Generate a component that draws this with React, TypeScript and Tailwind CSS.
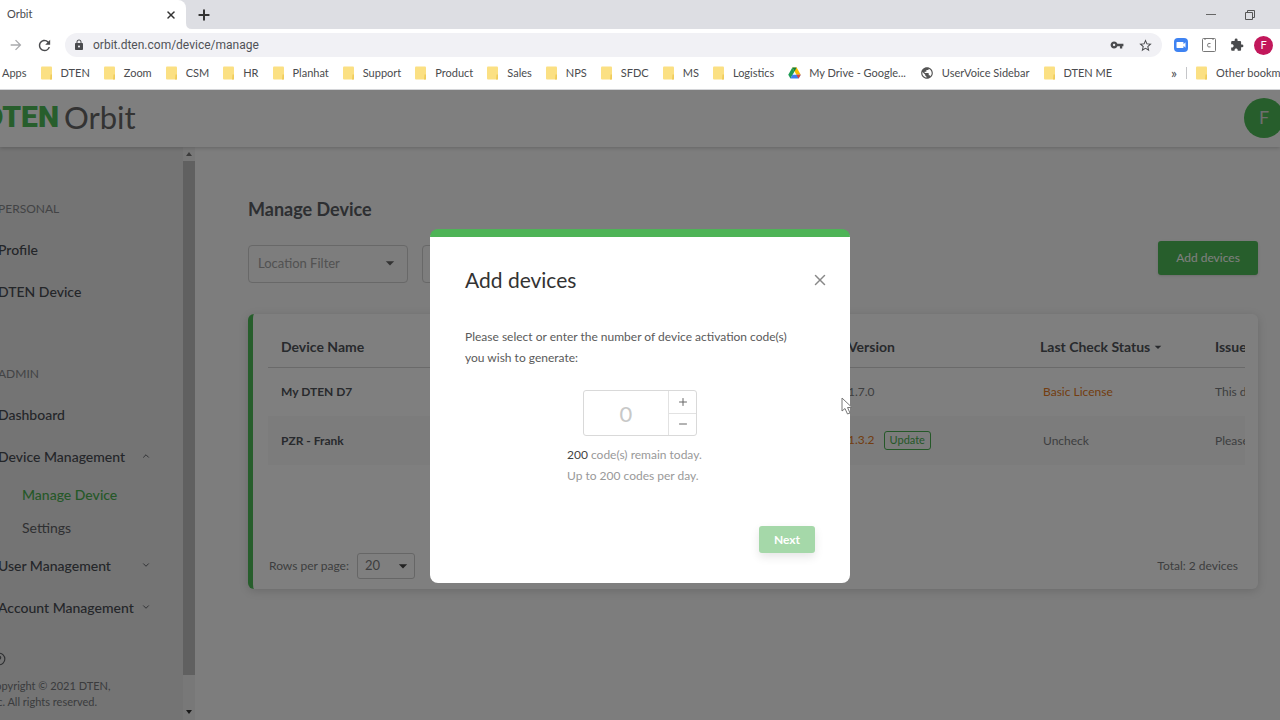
import type { ReactNode } from "react";
import { ChevronDown, ChevronUp, CircleHelp, Minus, Plus, X } from "lucide-react";
import {
  MdArrowDropDown,
  MdArrowForward,
  MdExtension,
  MdLock,
  MdPublic,
  MdRefresh,
  MdStarBorder,
  MdVideocam,
  MdVpnKey,
} from "react-icons/md";

type Bookmark = { label: string; icon?: "drive" | "globe" };

const bookmarks: Bookmark[] = [
  { label: "DTEN" },
  { label: "Zoom" },
  { label: "CSM" },
  { label: "HR" },
  { label: "Planhat" },
  { label: "Support" },
  { label: "Product" },
  { label: "Sales" },
  { label: "NPS" },
  { label: "SFDC" },
  { label: "MS" },
  { label: "Logistics" },
  { label: "My Drive - Google...", icon: "drive" },
  { label: "UserVoice Sidebar", icon: "globe" },
  { label: "DTEN ME" },
];

function FolderIcon() {
  return (
    <svg viewBox="0 0 12 14" className="h-[14px] w-3 shrink-0">
      <rect x="0" y="0.5" width="11" height="13" rx="1" fill="#fbe083" />
      <path d="M9.500 8.500h1.500v5h-2z" fill="#f0cc5c" />
    </svg>
  );
}

function DriveIcon() {
  return (
    <svg viewBox="0 0 24 22" className="h-3 w-[13px] shrink-0">
      <path d="M8 1 L0.500 14 L4.500 21 L12 8 Z" fill="#1e9c55" />
      <path d="M8 1 H16 L23.500 14 H15.500 Z" fill="#fbbc05" />
      <path d="M8 14 H23.500 L19.500 21 H4.500 Z" fill="#3f7ef0" />
      <path d="M15.500 14 H23.500 L19.500 21 Z" fill="#e34234" />
      <path d="M8 1 H16 L12 8 Z" fill="#118040" />
    </svg>
  );
}

function BookmarkLink({ label, icon }: Bookmark) {
  return (
    <a href="#" className="flex shrink-0 items-center gap-2 whitespace-nowrap">
      {icon === "drive" && <DriveIcon />}
      {icon === "globe" && <MdPublic className="size-[14px] text-[#555]" />}
      {!icon && <FolderIcon />}
      {label}
    </a>
  );
}

function BrowserChrome() {
  return (
    <header className="shrink-0 border-b border-[#d4d5d8] bg-white font-['Lato',sans-serif] text-[11px] text-[#4a4b4e]">
      <div className="flex h-[29px] items-center bg-[#dddee3]">
        <div className="flex h-full w-[186px] items-center justify-between rounded-tr-lg bg-white pr-[9px] pl-[7px]">
          <span>Orbit</span>
          <button aria-label="Close tab">
            <X className="size-3 text-[#333]" strokeWidth={3} />
          </button>
        </div>
        <svg viewBox="0 0 6 6" className="size-[6px] self-end">
          <path d="M0 0 Q0 6 6 6 H0 Z" fill="#fff" />
        </svg>
        <button aria-label="New tab" className="ml-1">
          <Plus className="size-4 text-[#333]" strokeWidth={3} />
        </button>
        <div className="ml-auto flex items-center gap-7 pr-6">
          <button aria-label="Minimize" className="h-px w-[10px] bg-[#666]" />
          <button aria-label="Restore">
            <svg viewBox="0 0 12 12" className="size-3" fill="none" stroke="#555">
              <path d="M1.500 3.500h7v7h-7zM3.500 3.500v-2h7v7h-2" />
            </svg>
          </button>
        </div>
      </div>

      <div className="flex h-8 items-center pr-[7px] pl-2">
        <button aria-label="Forward" className="text-[#a9aaad]">
          <MdArrowForward className="size-4" />
        </button>
        <button aria-label="Reload" className="ml-3 text-[#4a4b4e]">
          <MdRefresh className="size-[17px]" />
        </button>
        <div className="ml-3 flex h-6 flex-1 items-center rounded-full bg-[#f1f1f5] pr-[9px] pl-2">
          <MdLock className="size-3 shrink-0 text-[#4a4b4e]" />
          <label htmlFor="address" className="sr-only">
            Address
          </label>
          <input
            id="address"
            defaultValue="orbit.dten.com/device/manage"
            className="ml-2 min-w-0 flex-1 bg-transparent font-['Roboto',sans-serif] text-[12px] text-[#505257] outline-none"
          />
          <button aria-label="Saved passwords">
            <MdVpnKey className="size-[14px]" />
          </button>
          <button aria-label="Bookmark this page" className="ml-[14px]">
            <MdStarBorder className="size-[15px]" />
          </button>
        </div>
        <div className="ml-3 flex items-center gap-[14px]">
          <button aria-label="Zoom" className="flex size-[14px] items-center justify-center rounded-[4px] bg-[#3f83f2] text-white">
            <MdVideocam className="size-3" />
          </button>
          <button aria-label="Calendar">
            <svg viewBox="0 0 14 14" className="size-[14px]" fill="none" stroke="#777">
              <rect x="0.500" y="0.500" width="13" height="13" rx="1" />
              <path d="M3 0v2M11 0v2M8.500 5.500q-3-1-3 1.700t3 1.700" />
            </svg>
          </button>
          <button aria-label="Extensions">
            <MdExtension className="size-[14px]" />
          </button>
          <button aria-label="Profile" className="-ml-1 size-[19px] rounded-full bg-[#c2185b] text-white">
            F
          </button>
        </div>
      </div>

      <nav className="flex h-7 items-center overflow-hidden pb-1 pl-[2px]">
        <a href="#" className="shrink-0">
          Apps
        </a>
        <div className="ml-[14px] flex min-w-0 items-center gap-[14px]">
          {bookmarks.map((b) => (
            <BookmarkLink key={b.label} {...b} />
          ))}
        </div>
        <div className="ml-auto flex w-[109px] shrink-0 items-center">
          <button aria-label="More bookmarks" className="text-[14px] leading-4">
            »
          </button>
          <span className="mx-[9px] h-3 w-px shrink-0 bg-[#c5c6c9]" />
          <BookmarkLink label="Other bookmarks" />
        </div>
      </nav>
    </header>
  );
}

function NavItem({ children, open }: { children: ReactNode; open?: boolean }) {
  return (
    <a href="#" className="flex h-[42px] items-center justify-between pr-8 text-[14px] font-medium text-[#484c53]">
      {children}
      {open === true && <ChevronUp className="size-[10px]" />}
      {open === false && <ChevronDown className="size-[10px]" />}
    </a>
  );
}

function NavHeading({ children }: { children: ReactNode }) {
  return <h2 className="flex h-[42px] items-center pt-1 text-[12px] text-[#85878b]">{children}</h2>;
}

function Sidebar() {
  return (
    <aside className="flex w-[195px] shrink-0 bg-[#e8e8e8]">
      <nav className="-ml-[2px] min-w-0 flex-1 pt-[39px] whitespace-nowrap">
        <NavHeading>PERSONAL</NavHeading>
        <NavItem>Profile</NavItem>
        <NavItem>DTEN Device</NavItem>
        <div className="mt-[39px]">
          <NavHeading>ADMIN</NavHeading>
        </div>
        <NavItem>Dashboard</NavItem>
        <NavItem open>Device Management</NavItem>
        <a href="#" className="flex h-[34px] items-center pl-6 text-[14px] font-medium text-[#4bb151]">
          Manage Device
        </a>
        <a href="#" className="flex h-[33px] items-center pl-6 text-[14px] text-[#5f6165]">
          Settings
        </a>
        <NavItem open={false}>User Management</NavItem>
        <NavItem open={false}>Account Management</NavItem>
        <CircleHelp className="mt-6 -ml-[6px] size-[14px] text-[#5f6165]" />
        <p className="mt-3 -ml-[10px] text-[11px] leading-4 text-[#76787c]">
          Copyright © 2021 DTEN,
          <br />
          Inc. All rights reserved.
        </p>
      </nav>
      <div className="flex w-3 shrink-0 flex-col bg-[#f1f1f1]">
        <span className="flex h-[14px] items-center justify-center">
          <svg viewBox="0 0 6 4" className="h-1 w-[6px]">
            <path d="M0 4 L3 0 L6 4 Z" fill="#777" />
          </svg>
        </span>
        <div className="h-[514px] bg-[#c1c1c1]" />
        <span className="mt-auto flex h-4 items-center justify-center">
          <svg viewBox="0 0 6 4" className="h-1 w-[6px]">
            <path d="M0 0 L3 4 L6 0 Z" fill="#333" />
          </svg>
        </span>
      </div>
    </aside>
  );
}

function FilterSelect({ id, label }: { id: string; label: string }) {
  return (
    <div className="relative h-[38px] w-40">
      <label htmlFor={id} className="sr-only">
        {label}
      </label>
      <select id={id} className="size-full appearance-none rounded border border-[#d0d0d0] px-[9px] text-[13px] text-[#a4a4a4]">
        <option>{label}</option>
      </select>
      <MdArrowDropDown className="pointer-events-none absolute top-2 right-2 size-5 text-[#666]" />
    </div>
  );
}

function DeviceTable() {
  return (
    <table className="w-full table-fixed text-left text-[12px] whitespace-nowrap text-[#7b7d80]">
      <thead>
        <tr className="h-10 border-b border-[#d5d5d5] text-[14px] text-[#50545a]">
          <th className="px-[13px] font-bold">Device Name</th>
          <th className="w-48 px-[13px] font-bold">Version</th>
          <th className="w-[175px] px-[13px] font-bold">
            <button className="flex items-center">
              Last Check Status
              <MdArrowDropDown className="size-4" />
            </button>
          </th>
          <th className="w-[43px] overflow-hidden pl-[13px] font-bold">Issue Description</th>
        </tr>
      </thead>
      <tbody>
        <tr className="h-[49px]">
          <td className="px-[13px] font-bold text-[#50545a]">My DTEN D7</td>
          <td className="px-[13px]">1.7.0</td>
          <td className="px-4 text-[#e67a22]">Basic License</td>
          <td className="overflow-hidden pl-[13px]">This device</td>
        </tr>
        <tr className="h-[49px] bg-[#f8f8f8]">
          <td className="px-[13px] font-bold text-[#50545a]">PZR - Frank</td>
          <td className="px-[13px] text-[#e67a22]">
            1.3.2
            <button className="ml-[9px] h-[19px] rounded-[3px] border border-[#4bb151] px-[5px] text-[11px] text-[#4bb151]">Update</button>
          </td>
          <td className="px-4">Uncheck</td>
          <td className="overflow-hidden pl-[13px]">Please check</td>
        </tr>
      </tbody>
    </table>
  );
}

function DevicesPage() {
  return (
    <main className="min-w-0 flex-1 bg-[#fafafa] pt-[49px] pr-[22px] pl-[53px]">
      <h1 className="text-[18px] leading-[26px] font-bold text-[#5a5e64]">Manage Device</h1>
      <div className="mt-[23px] flex gap-[14px]">
        <FilterSelect id="location" label="Location Filter" />
        <FilterSelect id="status" label="Status Filter" />
        <button className="-mt-1 ml-auto h-[34px] w-[100px] rounded-[3px] bg-[#4fbc58] text-[12px] text-white shadow">Add devices</button>
      </div>
      <section className="mt-[31px] flex h-[275px] flex-col rounded-md border-l-[5px] border-[#4fbc58] bg-white pt-[13px] pr-[13px] pl-[15px] shadow-[0_2px_10px_rgba(0,0,0,0.15)]">
        <DeviceTable />
        <footer className="mt-auto mb-[10px] flex items-center justify-between text-[12px] text-[#7b7d80]">
          <div className="flex items-center gap-2 pl-px">
            <label htmlFor="rows">Rows per page:</label>
            <div className="relative">
              <select id="rows" className="block h-[26px] w-[58px] appearance-none rounded-[3px] border border-[#ccc] pl-[7px] text-[13px]">
                <option>20</option>
              </select>
              <MdArrowDropDown className="pointer-events-none absolute top-[3px] right-[2px] size-5 text-[#444]" />
            </div>
          </div>
          <span className="pr-[7px]">Total: 2 devices</span>
        </footer>
      </section>
    </main>
  );
}

function AddDevicesDialog() {
  return (
    <div className="absolute inset-0 z-20 flex items-center justify-center bg-black/50 pt-[2px]">
      <div role="dialog" aria-labelledby="dialog-title" className="relative w-[420px] rounded-lg border-t-8 border-[#4eb457] bg-white px-[35px] pt-[27px] pb-[30px]">
        <div className="flex items-center justify-between">
          <h2 id="dialog-title" className="text-[21px] leading-8 text-[#333]">
            Add devices
          </h2>
          <button aria-label="Close" className="-mr-[14px] text-[#888]">
            <X className="size-[18px]" />
          </button>
        </div>
        <label htmlFor="count" className="mt-[30px] block text-[12px] leading-[21px] text-[#5a5a5a]">
          Please select or enter the number of device activation code(s)
          <br />
          you wish to generate:
        </label>
        <div className="mx-auto mt-[22px] flex h-[46px] w-[114px] rounded-[3px] border border-[#d9d9d9]">
          <input id="count" placeholder="0" className="min-w-0 flex-1 text-center text-[22px] outline-none placeholder:text-[#c8c8c8]" />
          <div className="flex w-7 flex-col border-l border-[#e2e2e2] text-[#666]">
            <button aria-label="Increase" className="flex flex-1 items-center justify-center border-b border-[#e2e2e2]">
              <Plus className="size-3" />
            </button>
            <button aria-label="Decrease" className="flex flex-1 items-center justify-center">
              <Minus className="size-3" />
            </button>
          </div>
        </div>
        <p className="mx-auto mt-2 w-[146px] text-[12px] leading-[21px] whitespace-nowrap text-[#999]">
          <span className="text-[#444]">200</span> code(s) remain today.
          <br />
          Up to 200 codes per day.
        </p>
        <button className="mt-10 ml-auto block h-[27px] w-14 rounded-[3px] bg-[#a5d8a9] text-[12px] font-bold text-white shadow-[0_4px_10px_rgba(0,0,0,0.1)]">
          Next
        </button>
        <svg viewBox="0 0 12 18" className="absolute top-40 -right-[3px] h-[18px] w-3">
          <path d="M1 1 V14 L4 11.500 L6.500 17 L9 16 L6.500 10.500 H11 Z" fill="#fff" stroke="#777" />
        </svg>
      </div>
    </div>
  );
}

export default function App() {
  return (
    <div className="flex h-screen flex-col overflow-hidden">
      <BrowserChrome />
      <div className="relative flex min-h-0 flex-1 flex-col overflow-hidden font-['Lato',sans-serif]">
        <div className="z-10 flex h-[57px] shrink-0 items-center justify-between bg-white pb-[2px] shadow-[0_1px_4px_rgba(0,0,0,0.2)]">
          <div className="-ml-4 flex items-center gap-[5px] pb-[2px] leading-9">
            <span className="font-['Roboto',sans-serif] text-[30px] font-black text-[#4fbc58]">DTEN</span>
            <span className="text-[31px] text-[#666]">Orbit</span>
          </div>
          <button aria-label="Account" className="-mr-1 size-10 rounded-full bg-[#4fbc58] text-[18px] text-[#ddd]">
            F
          </button>
        </div>
        <div className="flex min-h-0 flex-1">
          <Sidebar />
          <DevicesPage />
        </div>
        <AddDevicesDialog />
      </div>
    </div>
  );
}
